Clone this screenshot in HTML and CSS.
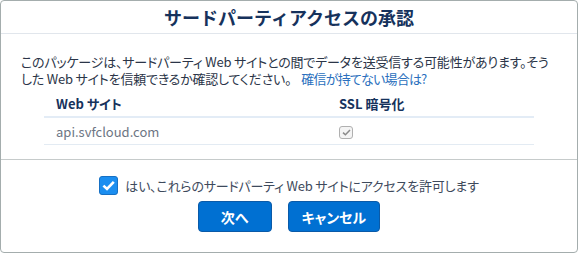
FILE: index.html
```html
<!DOCTYPE html>
<html lang="ja">
<head>
  <meta charset="UTF-8">
  <title>サードパーティアクセスの承認</title>
  <link rel="stylesheet" href="styles.css">
</head>
<body>

  <div class="dialog">
    <header class="dialog-head">
      <h1>サードパーティアクセスの承認</h1>
    </header>

    <div class="dialog-body">
      <p class="notice">このパッケージは、サードパーティ Web サイトとの間でデータを送受信する可能性があります。そう<br>した Web サイトを信頼できるか確認してください。<a href="#" class="help-link">確信が持てない場合は?</a></p>

      <div class="sites">
        <div class="sites-row sites-head">
          <span>Web サイト</span>
          <span>SSL 暗号化</span>
        </div>
        <div class="sites-row">
          <span class="host">api.svfcloud.com</span>
          <span>
            <span class="ssl-box">
              <svg width="9" height="7" viewBox="0 0 9 7"><path d="M1 3.6 L3.4 5.8 L8 1" fill="none" stroke="#8a8a8a" stroke-width="1.5"/></svg>
            </span>
          </span>
        </div>
      </div>
    </div>

    <footer class="dialog-foot">
      <label class="consent">
        <span class="check">
          <svg width="13" height="11" viewBox="0 0 13 11"><path d="M1.4 5.6 L5 9 L11.8 1.8" fill="none" stroke="#fff" stroke-width="2.6"/></svg>
        </span>
        はい、これらのサードパーティ Web サイトにアクセスを許可します
      </label>
      <div class="actions">
        <button class="button button-next">次へ</button>
        <button class="button">キャンセル</button>
      </div>
    </footer>
  </div>

</body>
</html>
```

FILE: styles.css
```css
html, body {
  margin: 0;
  padding: 0;
  height: 100%;
  background-color: #fff;
  font-family: "Noto Sans CJK JP", "Noto Sans", sans-serif;
  font-feature-settings: "palt";
  color: #2b3548;
}

.dialog {
  box-sizing: border-box;
  height: 100%;
  border: 1px solid #a4adad;
  border-radius: 4px;
  display: flex;
  flex-direction: column;
}

.dialog-head {
  height: 32px;
  border-bottom: 1px solid #e1e6ec;
  display: flex;
  align-items: center;
  justify-content: center;
}

h1 {
  margin: 0;
  font-size: 18px;
  font-weight: bold;
  font-feature-settings: normal;
  color: #16325c;
}

.dialog-body {
  padding: 19px 0 14px 0;
  border-bottom: 1px solid #c6cbcb;
}

.notice {
  margin: 0 0 0 20px;
  font-size: 13px;
  line-height: 17px;
  letter-spacing: -0.2px;
}

.help-link {
  margin-left: 10px;
  color: #2a6fbd;
  text-decoration: none;
  letter-spacing: -0.8px;
}

.sites {
  margin: 4px 43px 0 43px;
  font-size: 13px;
}

.sites-row {
  display: grid;
  grid-template-columns: 283px 1fr;
  align-items: center;
  height: 26px;
  padding: 0 12px;
  border-bottom: 1px solid #e3ebf3;
}

.sites-head {
  height: 25px;
  font-weight: bold;
  color: #16325c;
  border-bottom: 2px solid #e3ecf6;
}

.host {
  color: #6d7684;
}

.ssl-box {
  box-sizing: border-box;
  width: 14px;
  height: 13px;
  border: 1px solid #b0b0b0;
  border-radius: 3px;
  background-color: #f4f4f4;
  display: flex;
  align-items: center;
  justify-content: center;
  margin-top: 2px;
}

.dialog-foot {
  flex: 1;
  display: flex;
  flex-direction: column;
  align-items: center;
  padding: 16px 0 0 0;
}

.consent {
  display: flex;
  align-items: center;
  gap: 7px;
  font-size: 13px;
  color: #3e4a5c;
  letter-spacing: -0.2px;
}

.check {
  box-sizing: border-box;
  width: 19px;
  height: 19px;
  border-radius: 3px;
  background-color: #1b8ef0;
  border: 1px solid #1670c4;
  display: flex;
  align-items: center;
  justify-content: center;
}

.actions {
  display: flex;
  gap: 16px;
  margin-top: 6px;
}

.button {
  height: 31px;
  padding: 0 13px;
  background-color: #0070d2;
  color: #fff;
  border: 1px solid #0a5aa8;
  border-radius: 4px;
  font-family: "Noto Sans CJK JP", sans-serif;
  font-feature-settings: "palt";
  font-size: 14px;
  font-weight: bold;
  cursor: pointer;
}

.button-next {
  padding: 0 22px;
}
```
